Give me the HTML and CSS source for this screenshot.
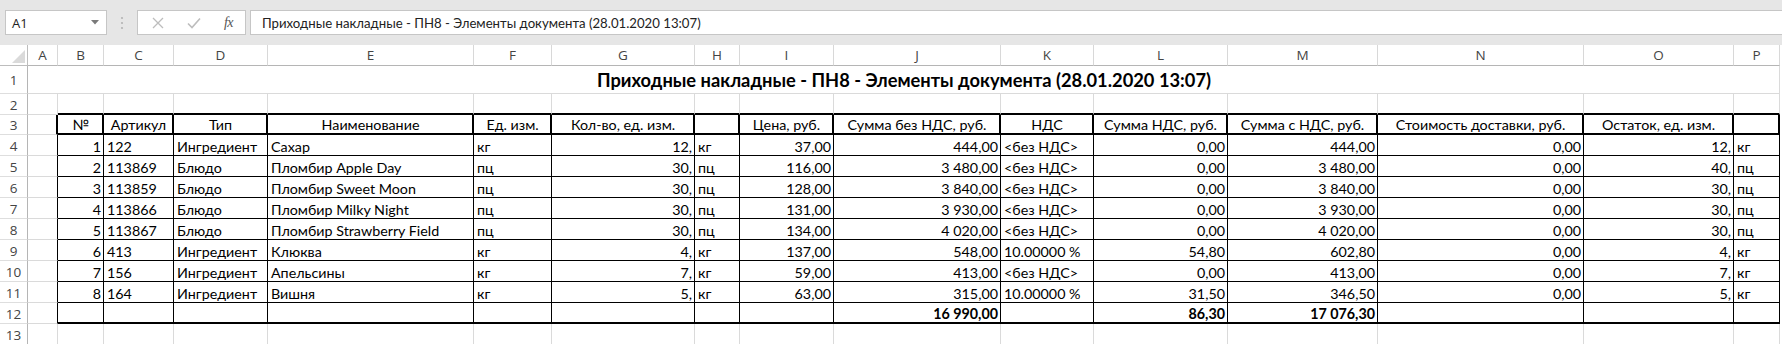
FILE: index.html
```html
<!DOCTYPE html>
<html lang="ru">
<head>
<meta charset="utf-8">
<title>Приходные накладные</title>
<link rel="stylesheet" href="styles.css">
</head>
<body>
<div class="topbar">
  <div class="namebox"><span>A1</span><svg class="dd" width="8" height="5" viewBox="0 0 8 5"><path d="M0 0H8L4 4.5Z" fill="#7a7a7a"/></svg></div>
  <svg class="dots" width="4" height="14" viewBox="0 0 4 14"><circle cx="2" cy="2" r="1.1" fill="#b4b4b4"/><circle cx="2" cy="7" r="1.1" fill="#b4b4b4"/><circle cx="2" cy="12" r="1.1" fill="#b4b4b4"/></svg>
  <div class="fbtns">
    <svg width="12" height="12" viewBox="0 0 12 12"><path d="M1 1L11 11M11 1L1 11" stroke="#bdbdbd" stroke-width="1.3"/></svg>
    <svg width="14" height="12" viewBox="0 0 14 12"><path d="M1 6.5L5 10.5L13 1.5" stroke="#bdbdbd" stroke-width="1.6" fill="none"/></svg>
    <span class="fx">fx</span>
  </div>
  <div class="finput">Приходные накладные - ПН8 - Элементы документа (28.01.2020 13:07)</div>
</div>

<div class="sheet">
  <div class="corner"><svg width="28" height="21" viewBox="0 0 28 21"><path d="M25 5V18H12Z" fill="#dadada"/></svg></div>
  <div class="ch">A</div><div class="ch">B</div><div class="ch">C</div><div class="ch">D</div><div class="ch">E</div><div class="ch">F</div><div class="ch">G</div><div class="ch">H</div><div class="ch">I</div><div class="ch">J</div><div class="ch">K</div><div class="ch">L</div><div class="ch">M</div><div class="ch">N</div><div class="ch">O</div><div class="ch">P</div>

  <div class="rh">1</div>
  <div class="c title">Приходные накладные - ПН8 - Элементы документа (28.01.2020 13:07)</div>

  <div class="rh">2</div>
  <div class="c"></div><div class="c tb"></div><div class="c tb"></div><div class="c tb"></div><div class="c tb"></div><div class="c tb"></div><div class="c tb"></div><div class="c tb"></div><div class="c tb"></div><div class="c tb"></div><div class="c tb"></div><div class="c tb"></div><div class="c tb"></div><div class="c tb"></div><div class="c tb"></div><div class="c tb"></div>

  <div class="rh">3</div>
  <div class="c ah"></div>
  <div class="c h m">№</div><div class="c h m">Артикул</div><div class="c h m">Тип</div><div class="c h m">Наименование</div><div class="c h m">Ед. изм.</div><div class="c h m">Кол-во, ед. изм.</div><div class="c h m"></div><div class="c h m">Цена, руб.</div><div class="c h m">Сумма без НДС, руб.</div><div class="c h m">НДС</div><div class="c h m">Сумма НДС, руб.</div><div class="c h m">Сумма с НДС, руб.</div><div class="c h m">Стоимость доставки, руб.</div><div class="c h m">Остаток, ед. изм.</div><div class="c h m"></div>

  <div class="rh">4</div>
  <div class="c ab"></div>
  <div class="c d r">1</div><div class="c d">122</div><div class="c d">Ингредиент</div><div class="c d">Сахар</div><div class="c d">кг</div><div class="c d r">12,</div><div class="c d">кг</div><div class="c d r">37,00</div><div class="c d r">444,00</div><div class="c d">&lt;без НДС&gt;</div><div class="c d r">0,00</div><div class="c d r">444,00</div><div class="c d r">0,00</div><div class="c d r">12,</div><div class="c d">кг</div>

  <div class="rh">5</div>
  <div class="c ab"></div>
  <div class="c d r">2</div><div class="c d">113869</div><div class="c d">Блюдо</div><div class="c d">Пломбир Apple Day</div><div class="c d">пц</div><div class="c d r">30,</div><div class="c d">пц</div><div class="c d r">116,00</div><div class="c d r">3 480,00</div><div class="c d">&lt;без НДС&gt;</div><div class="c d r">0,00</div><div class="c d r">3 480,00</div><div class="c d r">0,00</div><div class="c d r">40,</div><div class="c d">пц</div>

  <div class="rh">6</div>
  <div class="c ab"></div>
  <div class="c d r">3</div><div class="c d">113859</div><div class="c d">Блюдо</div><div class="c d">Пломбир Sweet Moon</div><div class="c d">пц</div><div class="c d r">30,</div><div class="c d">пц</div><div class="c d r">128,00</div><div class="c d r">3 840,00</div><div class="c d">&lt;без НДС&gt;</div><div class="c d r">0,00</div><div class="c d r">3 840,00</div><div class="c d r">0,00</div><div class="c d r">30,</div><div class="c d">пц</div>

  <div class="rh">7</div>
  <div class="c ab"></div>
  <div class="c d r">4</div><div class="c d">113866</div><div class="c d">Блюдо</div><div class="c d">Пломбир Milky Night</div><div class="c d">пц</div><div class="c d r">30,</div><div class="c d">пц</div><div class="c d r">131,00</div><div class="c d r">3 930,00</div><div class="c d">&lt;без НДС&gt;</div><div class="c d r">0,00</div><div class="c d r">3 930,00</div><div class="c d r">0,00</div><div class="c d r">30,</div><div class="c d">пц</div>

  <div class="rh">8</div>
  <div class="c ab"></div>
  <div class="c d r">5</div><div class="c d">113867</div><div class="c d">Блюдо</div><div class="c d">Пломбир Strawberry Field</div><div class="c d">пц</div><div class="c d r">30,</div><div class="c d">пц</div><div class="c d r">134,00</div><div class="c d r">4 020,00</div><div class="c d">&lt;без НДС&gt;</div><div class="c d r">0,00</div><div class="c d r">4 020,00</div><div class="c d r">0,00</div><div class="c d r">30,</div><div class="c d">пц</div>

  <div class="rh">9</div>
  <div class="c ab"></div>
  <div class="c d r">6</div><div class="c d">413</div><div class="c d">Ингредиент</div><div class="c d">Клюква</div><div class="c d">кг</div><div class="c d r">4,</div><div class="c d">кг</div><div class="c d r">137,00</div><div class="c d r">548,00</div><div class="c d">10.00000 %</div><div class="c d r">54,80</div><div class="c d r">602,80</div><div class="c d r">0,00</div><div class="c d r">4,</div><div class="c d">кг</div>

  <div class="rh">10</div>
  <div class="c ab"></div>
  <div class="c d r">7</div><div class="c d">156</div><div class="c d">Ингредиент</div><div class="c d">Апельсины</div><div class="c d">кг</div><div class="c d r">7,</div><div class="c d">кг</div><div class="c d r">59,00</div><div class="c d r">413,00</div><div class="c d">&lt;без НДС&gt;</div><div class="c d r">0,00</div><div class="c d r">413,00</div><div class="c d r">0,00</div><div class="c d r">7,</div><div class="c d">кг</div>

  <div class="rh">11</div>
  <div class="c ab"></div>
  <div class="c d r">8</div><div class="c d">164</div><div class="c d">Ингредиент</div><div class="c d">Вишня</div><div class="c d">кг</div><div class="c d r">5,</div><div class="c d">кг</div><div class="c d r">63,00</div><div class="c d r">315,00</div><div class="c d">10.00000 %</div><div class="c d r">31,50</div><div class="c d r">346,50</div><div class="c d r">0,00</div><div class="c d r">5,</div><div class="c d">кг</div>

  <div class="rh">12</div>
  <div class="c ab"></div>
  <div class="c s"></div><div class="c s"></div><div class="c s"></div><div class="c s"></div><div class="c s"></div><div class="c s"></div><div class="c s"></div><div class="c s"></div><div class="c s r b">16 990,00</div><div class="c s"></div><div class="c s r b">86,30</div><div class="c s r b">17 076,30</div><div class="c s"></div><div class="c s"></div><div class="c s"></div>

  <div class="rh">13</div>
  <div class="c"></div><div class="c"></div><div class="c"></div><div class="c"></div><div class="c"></div><div class="c"></div><div class="c"></div><div class="c"></div><div class="c"></div><div class="c"></div><div class="c"></div><div class="c"></div><div class="c"></div><div class="c"></div><div class="c"></div><div class="c"></div>
</div>
</body>
</html>
```

FILE: styles.css
```css
* { box-sizing: border-box; margin: 0; padding: 0; }

body {
  width: 1782px;
  height: 344px;
  overflow: hidden;
  background: #ffffff;
  font-family: Lato, "Noto Sans", sans-serif;
  color: #000;
}

/* ---------- formula bar ---------- */
.topbar {
  height: 45px;
  background: #e6e6e6;
  display: flex;
  align-items: flex-start;
  padding: 10px 0 0 5px;
  overflow: hidden;
}

.namebox {
  width: 102px;
  height: 25px;
  flex: none;
  background: #fff;
  border: 1px solid #c6c6c6;
  display: flex;
  align-items: center;
  justify-content: space-between;
  padding: 0 7px 0 6px;
  font: 13px "Open Sans", "Noto Sans", sans-serif;
  color: #222;
}

.dots {
  flex: none;
  margin: 6px 13px 0 13px;
}

.fbtns {
  width: 109px;
  height: 25px;
  flex: none;
  background: #fff;
  border: 1px solid #c6c6c6;
  display: flex;
  align-items: center;
  justify-content: space-between;
  padding: 0 12px 0 14px;
}

.fx {
  font: italic 14px "Liberation Serif", serif;
  color: #555;
  letter-spacing: -0.5px;
}

.finput {
  flex: 1 0 auto;
  height: 25px;
  margin-left: 4px;
  margin-right: -20px;
  background: #fff;
  border: 1px solid #c6c6c6;
  display: flex;
  align-items: center;
  padding-left: 11px;
  font: 13.2px Lato, "Noto Sans", sans-serif;
  color: #222;
  white-space: nowrap;
}

/* ---------- sheet grid ---------- */
.sheet {
  width: 1780px;
  display: grid;
  grid-template-columns: 28px 30px 46px 70px 94px 206px 78px 143px 45px 94px 167px 93px 134px 150px 206px 150px 46px;
  grid-template-rows: 21px 28px 21px 20px repeat(10, 21px);
}

.corner {
  border-right: 1px solid #bdbdbd;
  border-bottom: 1px solid #bdbdbd;
}
.corner svg { display: block; }

.ch {
  border-right: 1px solid #d8d8d8;
  border-bottom: 1px solid #b5b5b5;
  display: flex;
  align-items: center;
  justify-content: center;
  font: 13.5px "Open Sans", "Noto Sans", sans-serif;
  color: #444;
}

.rh {
  border-right: 1px solid #b5b5b5;
  border-bottom: 1px solid #dedede;
  display: flex;
  align-items: center;
  justify-content: center;
  font: 13.5px "Open Sans", "Noto Sans", sans-serif;
  color: #444;
  padding-top: 1px;
}

.c {
  border-right: 1px solid #dadada;
  border-bottom: 1px solid #dadada;
  display: flex;
  align-items: flex-end;
  padding: 0 2px 0 3px;
  font-size: 14.3px;
  line-height: 17px;
  white-space: nowrap;
  overflow: hidden;
}

.title {
  grid-column: span 16;
  justify-content: center;
  font-weight: 700;
  font-size: 18.3px;
  line-height: 22px;
  padding-bottom: 2px;
}

.tb { border-bottom: 2px solid #000; }
.ah { border-right: 2px solid #000; }
.ab { border-right: 1px solid #000; }

.h {
  border-right: 2px solid #000;
  border-bottom: 2px solid #000;
}

.d {
  border-right: 1px solid #000;
  border-bottom: 1px solid #000;
}

.s {
  border-right: 1px solid #000;
  border-bottom: 2px solid #000;
}

.r { justify-content: flex-end; }
.m { justify-content: center; }
.b { font-weight: 700; }
```
